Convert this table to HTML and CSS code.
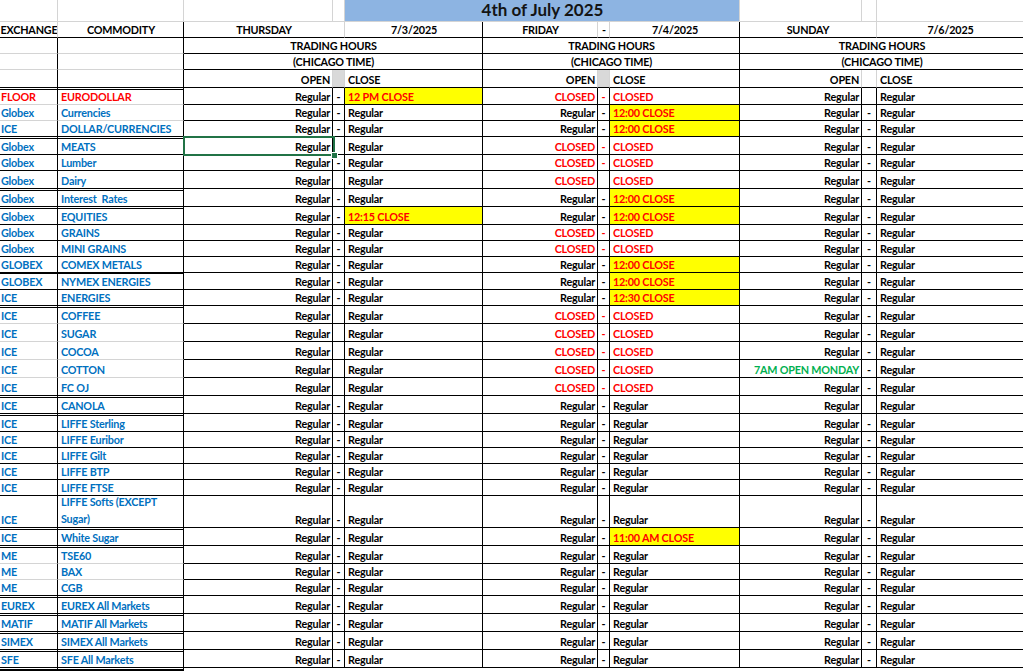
FILE: index.html
```html
<!DOCTYPE html>
<html lang="en">
<head>
<meta charset="utf-8">
<title>4th of July 2025 - Trading Hours</title>
<link rel="stylesheet" href="styles.css">
</head>
<body>
<div class="sheet">
  <div class="row h22">
    <div class="gl"></div><div class="gl"></div><div class="gl"></div><div class="gl"></div>
    <div class="title">4th of July 2025</div>
    <div class="gl"></div><div class="gl"></div><div class="gl k"></div>
  </div>
  <div class="row h16 hd">
    <div class="ctr gr">EXCHANGE</div>
    <div class="ctr">COMMODITY</div>
    <div class="ctr span2 gr">THURSDAY</div>
    <div class="ctr">7/3/2025</div>
    <div class="ctr gr">FRIDAY</div>
    <div class="ctr gr">-</div>
    <div class="ctr">7/4/2025</div>
    <div class="ctr span2 gr">SUNDAY</div>
    <div class="ctr k">7/6/2025</div>
  </div>
  <div class="row h16 hd gb">
    <div class="a"></div><div class="b"></div>
    <div class="ctr span3">TRADING HOURS</div>
    <div class="ctr span3">TRADING HOURS</div>
    <div class="ctr span3 k">TRADING HOURS</div>
  </div>
  <div class="row h16 hd gb">
    <div class="a"></div><div class="b"></div>
    <div class="ctr span3">(CHICAGO TIME)</div>
    <div class="ctr span3">(CHICAGO TIME)</div>
    <div class="ctr span3 k">(CHICAGO TIME)</div>
  </div>
  <div class="row h18 hd">
    <div class="a"></div><div class="b"></div>
    <div class="o gr">OPEN</div><div class="fill gr"></div><div class="c">CLOSE</div>
    <div class="o gr">OPEN</div><div class="fill gr"></div><div class="c">CLOSE</div>
    <div class="o gr">OPEN</div><div class="gr"></div><div class="c k">CLOSE</div>
  </div>

  <div class="row h17 dt gb">
    <div class="a red">FLOOR</div><div class="b red">EURODOLLAR</div>
    <div class="o">Regular</div><div class="d">-</div><div class="c y red">12 PM CLOSE</div>
    <div class="o red">CLOSED</div><div class="d red">-</div><div class="c red">CLOSED</div>
    <div class="o">Regular</div><div class="d"></div><div class="c k">Regular</div>
  </div>
  <div class="row h16 gb">
    <div class="a">Globex</div><div class="b">Currencies</div>
    <div class="o">Regular</div><div class="d">-</div><div class="c">Regular</div>
    <div class="o">Regular</div><div class="d">-</div><div class="c y red">12:00 CLOSE</div>
    <div class="o">Regular</div><div class="d">-</div><div class="c k">Regular</div>
  </div>
  <div class="row h16">
    <div class="a">ICE</div><div class="b">DOLLAR/CURRENCIES</div>
    <div class="o">Regular</div><div class="d">-</div><div class="c">Regular</div>
    <div class="o">Regular</div><div class="d">-</div><div class="c y red">12:00 CLOSE</div>
    <div class="o">Regular</div><div class="d">-</div><div class="c k">Regular</div>
  </div>
  <div class="row h18 dt">
    <div class="a">Globex</div><div class="b">MEATS</div>
    <div class="o">Regular</div><div class="d"></div><div class="c">Regular</div>
    <div class="o red">CLOSED</div><div class="d red">-</div><div class="c red">CLOSED</div>
    <div class="o">Regular</div><div class="d">-</div><div class="c k">Regular</div>
  </div>
  <div class="row h16">
    <div class="a">Globex</div><div class="b">Lumber</div>
    <div class="o">Regular</div><div class="d">-</div><div class="c">Regular</div>
    <div class="o red">CLOSED</div><div class="d red">-</div><div class="c red">CLOSED</div>
    <div class="o">Regular</div><div class="d">-</div><div class="c k">Regular</div>
  </div>
  <div class="row h18">
    <div class="a">Globex</div><div class="b">Dairy</div>
    <div class="o">Regular</div><div class="d"></div><div class="c">Regular</div>
    <div class="o red">CLOSED</div><div class="d"></div><div class="c red">CLOSED</div>
    <div class="o">Regular</div><div class="d">-</div><div class="c k">Regular</div>
  </div>
  <div class="row h18 dt">
    <div class="a">Globex</div><div class="b">Interest&nbsp; Rates</div>
    <div class="o">Regular</div><div class="d">-</div><div class="c">Regular</div>
    <div class="o">Regular</div><div class="d">-</div><div class="c y red">12:00 CLOSE</div>
    <div class="o">Regular</div><div class="d">-</div><div class="c k">Regular</div>
  </div>
  <div class="row h18 dt">
    <div class="a">Globex</div><div class="b">EQUITIES</div>
    <div class="o">Regular</div><div class="d">-</div><div class="c y red">12:15 CLOSE</div>
    <div class="o">Regular</div><div class="d">-</div><div class="c y red">12:00 CLOSE</div>
    <div class="o">Regular</div><div class="d">-</div><div class="c k">Regular</div>
  </div>
  <div class="row h16">
    <div class="a">Globex</div><div class="b">GRAINS</div>
    <div class="o">Regular</div><div class="d">-</div><div class="c">Regular</div>
    <div class="o red">CLOSED</div><div class="d red">-</div><div class="c red">CLOSED</div>
    <div class="o">Regular</div><div class="d">-</div><div class="c k">Regular</div>
  </div>
  <div class="row h16">
    <div class="a">Globex</div><div class="b">MINI GRAINS</div>
    <div class="o">Regular</div><div class="d">-</div><div class="c">Regular</div>
    <div class="o red">CLOSED</div><div class="d red">-</div><div class="c red">CLOSED</div>
    <div class="o">Regular</div><div class="d">-</div><div class="c k">Regular</div>
  </div>
  <div class="row h16">
    <div class="a">GLOBEX</div><div class="b">COMEX METALS</div>
    <div class="o">Regular</div><div class="d">-</div><div class="c">Regular</div>
    <div class="o">Regular</div><div class="d">-</div><div class="c y red">12:00 CLOSE</div>
    <div class="o">Regular</div><div class="d">-</div><div class="c k">Regular</div>
  </div>
  <div class="row h17 tt">
    <div class="a">GLOBEX</div><div class="b">NYMEX ENERGIES</div>
    <div class="o">Regular</div><div class="d">-</div><div class="c">Regular</div>
    <div class="o">Regular</div><div class="d">-</div><div class="c y red">12:00 CLOSE</div>
    <div class="o">Regular</div><div class="d">-</div><div class="c k">Regular</div>
  </div>
  <div class="row h16">
    <div class="a">ICE</div><div class="b">ENERGIES</div>
    <div class="o">Regular</div><div class="d">-</div><div class="c">Regular</div>
    <div class="o">Regular</div><div class="d">-</div><div class="c y red">12:30 CLOSE</div>
    <div class="o">Regular</div><div class="d">-</div><div class="c k">Regular</div>
  </div>
  <div class="row h18 dt gb">
    <div class="a">ICE</div><div class="b">COFFEE</div>
    <div class="o">Regular</div><div class="d"></div><div class="c">Regular</div>
    <div class="o red">CLOSED</div><div class="d red">-</div><div class="c red">CLOSED</div>
    <div class="o">Regular</div><div class="d">-</div><div class="c k">Regular</div>
  </div>
  <div class="row h18 gb">
    <div class="a">ICE</div><div class="b">SUGAR</div>
    <div class="o">Regular</div><div class="d"></div><div class="c">Regular</div>
    <div class="o red">CLOSED</div><div class="d red">-</div><div class="c red">CLOSED</div>
    <div class="o">Regular</div><div class="d">-</div><div class="c k">Regular</div>
  </div>
  <div class="row h18 gb">
    <div class="a">ICE</div><div class="b">COCOA</div>
    <div class="o">Regular</div><div class="d"></div><div class="c">Regular</div>
    <div class="o red">CLOSED</div><div class="d red">-</div><div class="c red">CLOSED</div>
    <div class="o">Regular</div><div class="d">-</div><div class="c k">Regular</div>
  </div>
  <div class="row h18 gb">
    <div class="a">ICE</div><div class="b">COTTON</div>
    <div class="o">Regular</div><div class="d"></div><div class="c">Regular</div>
    <div class="o red">CLOSED</div><div class="d red">-</div><div class="c red">CLOSED</div>
    <div class="o grn">7AM OPEN MONDAY</div><div class="d">-</div><div class="c k">Regular</div>
  </div>
  <div class="row h18">
    <div class="a">ICE</div><div class="b">FC OJ</div>
    <div class="o">Regular</div><div class="d"></div><div class="c">Regular</div>
    <div class="o red">CLOSED</div><div class="d red">-</div><div class="c red">CLOSED</div>
    <div class="o">Regular</div><div class="d">-</div><div class="c k">Regular</div>
  </div>
  <div class="row h18 dt">
    <div class="a">ICE</div><div class="b">CANOLA</div>
    <div class="o">Regular</div><div class="d">-</div><div class="c">Regular</div>
    <div class="o">Regular</div><div class="d">-</div><div class="c">Regular</div>
    <div class="o">Regular</div><div class="d"></div><div class="c k">Regular</div>
  </div>
  <div class="row h18 dt">
    <div class="a">ICE</div><div class="b">LIFFE Sterling</div>
    <div class="o">Regular</div><div class="d">-</div><div class="c">Regular</div>
    <div class="o">Regular</div><div class="d">-</div><div class="c">Regular</div>
    <div class="o">Regular</div><div class="d">-</div><div class="c k">Regular</div>
  </div>
  <div class="row h16">
    <div class="a">ICE</div><div class="b">LIFFE Euribor</div>
    <div class="o">Regular</div><div class="d">-</div><div class="c">Regular</div>
    <div class="o">Regular</div><div class="d">-</div><div class="c">Regular</div>
    <div class="o">Regular</div><div class="d">-</div><div class="c k">Regular</div>
  </div>
  <div class="row h16">
    <div class="a">ICE</div><div class="b">LIFFE Gilt</div>
    <div class="o">Regular</div><div class="d">-</div><div class="c">Regular</div>
    <div class="o">Regular</div><div class="d">-</div><div class="c">Regular</div>
    <div class="o">Regular</div><div class="d">-</div><div class="c k">Regular</div>
  </div>
  <div class="row h16">
    <div class="a">ICE</div><div class="b">LIFFE BTP</div>
    <div class="o">Regular</div><div class="d">-</div><div class="c">Regular</div>
    <div class="o">Regular</div><div class="d">-</div><div class="c">Regular</div>
    <div class="o">Regular</div><div class="d">-</div><div class="c k">Regular</div>
  </div>
  <div class="row h16">
    <div class="a">ICE</div><div class="b">LIFFE FTSE</div>
    <div class="o">Regular</div><div class="d">-</div><div class="c">Regular</div>
    <div class="o">Regular</div><div class="d">-</div><div class="c">Regular</div>
    <div class="o">Regular</div><div class="d">-</div><div class="c k">Regular</div>
  </div>
  <div class="row h32">
    <div class="a">ICE</div><div class="b wrap">LIFFE Softs (EXCEPT<br>Sugar)</div>
    <div class="o">Regular</div><div class="d">-</div><div class="c">Regular</div>
    <div class="o">Regular</div><div class="d">-</div><div class="c">Regular</div>
    <div class="o">Regular</div><div class="d">-</div><div class="c k">Regular</div>
  </div>
  <div class="row h18 dt">
    <div class="a">ICE</div><div class="b">White Sugar</div>
    <div class="o">Regular</div><div class="d">-</div><div class="c">Regular</div>
    <div class="o">Regular</div><div class="d">-</div><div class="c y red">11:00 AM CLOSE</div>
    <div class="o">Regular</div><div class="d">-</div><div class="c k">Regular</div>
  </div>
  <div class="row h18 dt gb">
    <div class="a">ME</div><div class="b">TSE60</div>
    <div class="o">Regular</div><div class="d">-</div><div class="c">Regular</div>
    <div class="o">Regular</div><div class="d">-</div><div class="c">Regular</div>
    <div class="o">Regular</div><div class="d">-</div><div class="c k">Regular</div>
  </div>
  <div class="row h16 gb">
    <div class="a">ME</div><div class="b">BAX</div>
    <div class="o">Regular</div><div class="d">-</div><div class="c">Regular</div>
    <div class="o">Regular</div><div class="d">-</div><div class="c">Regular</div>
    <div class="o">Regular</div><div class="d">-</div><div class="c k">Regular</div>
  </div>
  <div class="row h16">
    <div class="a">ME</div><div class="b">CGB</div>
    <div class="o">Regular</div><div class="d">-</div><div class="c">Regular</div>
    <div class="o">Regular</div><div class="d">-</div><div class="c">Regular</div>
    <div class="o">Regular</div><div class="d">-</div><div class="c k">Regular</div>
  </div>
  <div class="row h18 dt">
    <div class="a">EUREX</div><div class="b">EUREX All Markets</div>
    <div class="o">Regular</div><div class="d">-</div><div class="c">Regular</div>
    <div class="o">Regular</div><div class="d">-</div><div class="c">Regular</div>
    <div class="o">Regular</div><div class="d">-</div><div class="c k">Regular</div>
  </div>
  <div class="row h18 dt">
    <div class="a">MATIF</div><div class="b">MATIF All Markets</div>
    <div class="o">Regular</div><div class="d">-</div><div class="c">Regular</div>
    <div class="o">Regular</div><div class="d">-</div><div class="c">Regular</div>
    <div class="o">Regular</div><div class="d">-</div><div class="c k">Regular</div>
  </div>
  <div class="row h18 dt">
    <div class="a">SIMEX</div><div class="b">SIMEX All Markets</div>
    <div class="o">Regular</div><div class="d">-</div><div class="c">Regular</div>
    <div class="o">Regular</div><div class="d">-</div><div class="c">Regular</div>
    <div class="o">Regular</div><div class="d">-</div><div class="c k">Regular</div>
  </div>
  <div class="row h18 dt">
    <div class="a">SFE</div><div class="b">SFE All Markets</div>
    <div class="o">Regular</div><div class="d">-</div><div class="c">Regular</div>
    <div class="o">Regular</div><div class="d">-</div><div class="c">Regular</div>
    <div class="o">Regular</div><div class="d">-</div><div class="c k">Regular</div>
  </div>
  <div class="row h3 dt blank">
    <div class="a"></div><div class="b"></div>
    <div></div><div></div><div></div><div></div><div></div><div></div><div></div><div></div><div class="k"></div>
  </div>

  <div class="sel"></div>
</div>
</body>
</html>
```
FILE: styles.css
```css
html, body {
  margin: 0;
  padding: 0;
  overflow: hidden;
  background: #fff;
}
body {
  font-family: Lato, "Liberation Sans", sans-serif;
  font-weight: 700;
  font-size: 10.8px;
  letter-spacing: -0.2px;
  color: #000;
}
.sheet {
  position: relative;
  display: grid;
  grid-template-columns: 58px 126px 149px 12px 138px 115px 12px 130px 122px 15px 146px;
}
.row { display: contents; }
.row > div {
  box-sizing: border-box;
  border-right: 1px solid #000;
  border-bottom: 1px solid #000;
  display: flex;
  align-items: flex-end;
  line-height: 15px;
  padding: 0 2px 0 3px;
  white-space: nowrap;
  overflow: hidden;
}
.h3 > div { height: 3px; }
.h16 > div { height: 16px; }
.h17 > div { height: 17px; }
.h18 > div { height: 18px; }
.h22 > div { height: 22px; }
.h32 > div { height: 32px; }

.row > .k { border-right: none; }
.row > .gl { border-color: #d4d4d4; }
.row > .gr { border-right-color: #d4d4d4; }

.row > .title {
  grid-column: span 4;
  background: #8db4e2;
  justify-content: center;
  align-items: center;
  font-size: 17px;
  letter-spacing: 0;
  line-height: 20px;
  padding-bottom: 2px;
  color: #141414;
  border-right-color: #d4d4d4;
  border-bottom-color: #d4d4d4;
}

.span2 { grid-column: span 2; }
.span3 { grid-column: span 3; }
.ctr { justify-content: center; }
.hd > .span2 { padding-left: 2px; }

.a { color: #0070c0; padding-left: 1px !important; }
.b { color: #0070c0; }
.gb > .a, .gb > .b { border-bottom-color: #d4d4d4; }
.dt > .a, .dt > .b { box-shadow: inset 0 1px 0 #fff, inset 0 2px 0 #000; }
.tt > .a, .tt > .b { box-shadow: inset 0 1px 0 #000; }
.blank > div:not(.a):not(.b) { border: none; }

.o { justify-content: flex-end; }
.d { justify-content: center; padding: 0 !important; }
.c { justify-content: flex-start; }
.fill { background: #d9d9d9; }

.y { background: #ffff00; }
.red { color: #ff0000; }
.grn { color: #00b050; }

.wrap {
  white-space: normal !important;
  line-height: 17px !important;
}

.sel {
  position: absolute;
  left: 183px;
  top: 136px;
  width: 152px;
  height: 20px;
  box-sizing: border-box;
  border: 2px solid #217346;
  pointer-events: none;
}
.sel::after {
  content: "";
  position: absolute;
  right: -5px;
  bottom: -5px;
  width: 5px;
  height: 5px;
  background: #217346;
  border: 1px solid #fff;
}
```
